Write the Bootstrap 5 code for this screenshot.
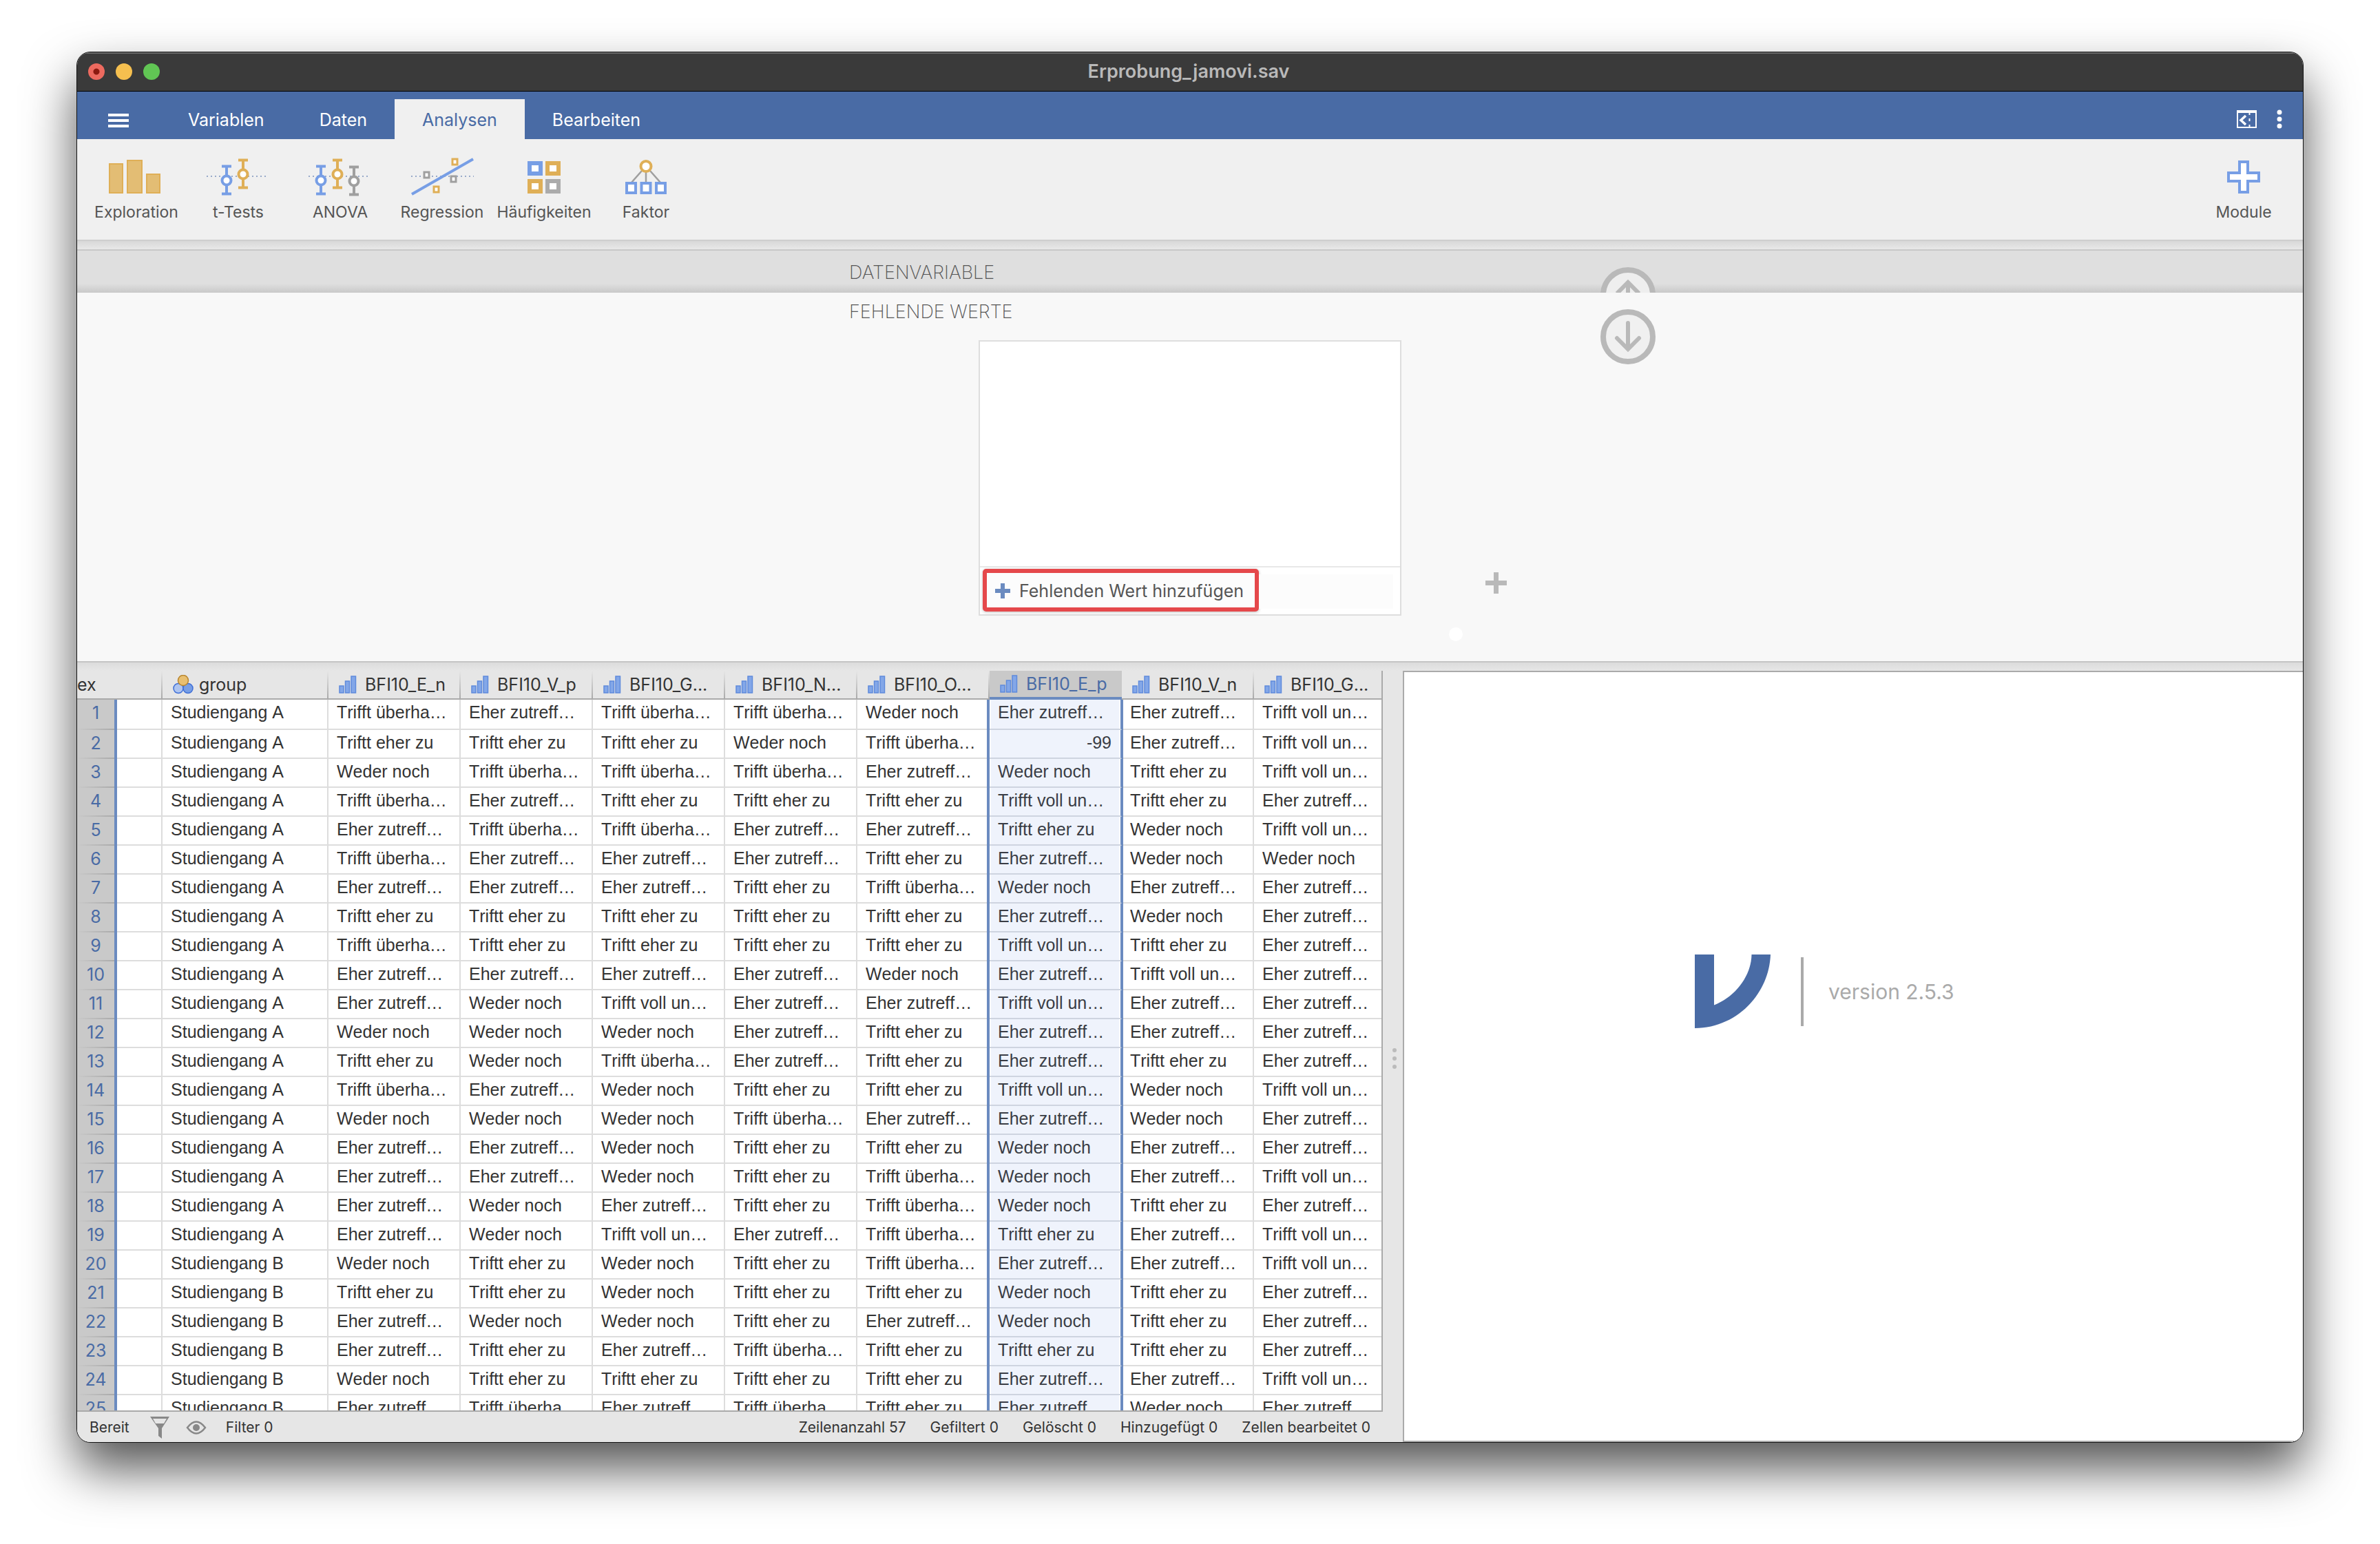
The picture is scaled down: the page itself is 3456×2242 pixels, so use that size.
<!DOCTYPE html>
<html lang="de">
<head>
<meta charset="utf-8">
<meta name="viewport" content="width=device-width, initial-scale=1">
<title>Erprobung_jamovi.sav</title>
<link href="https://cdn.jsdelivr.net/npm/bootstrap@5.3.0/dist/css/bootstrap.min.css" rel="stylesheet">
<style>
:root{--blue:#496ba5;--sel:#6b8bc0;--ink:#333;--rule:#aaa}
body{font-family:Inter,"Liberation Sans",sans-serif;background:#fff;color:var(--ink)}
button{font:inherit;color:inherit;background:none;border:0;padding:0}
svg{display:block}
.desktop{padding:75px 111px 147px}
.app-window{border:1px solid #111;border-radius:20px;background:#e6e6e6;box-shadow:0 38px 72px rgba(0,0,0,.67);min-height:0}
/* title bar */
.titlebar{height:57px;background:#3a3a3a;border-bottom:1px solid #000;box-shadow:inset 0 2px 0 #6a6a6a;padding:0 16px}
.light{width:24px;height:24px;border-radius:50%}
.wintitle{font-size:27px;line-height:30px;font-weight:600;color:#b9b9b9}
.light-r{background:radial-gradient(circle,#8c1a10 0 4px,#ed6a5f 5px)}
.light-y{background:#f5bf4f}.light-g{background:#61c554}
.spacer-lights{width:108px}
/* ribbon */
.ribbon-tabs{height:69px;background:var(--blue);color:#fff;font-size:25px;line-height:30px}
.rtab{height:58px;padding:2px 40px 0}
.rtab.burger{width:121px;padding:4px 0 0 45px}
.rtab.corner{padding:0 26px 0 0}
.rtab.active{background:#f0f0f0;color:var(--blue)}
.tools{height:146px;background:#f0f0f0;padding:26px 12px 0;color:#555}
.tool{width:148px;font-size:23px;line-height:28px}
.tool svg{margin:0 auto 6px}
.ribbon-shade{height:16px;border-top:2px solid #cecece;border-bottom:2px solid #c8c8c8;background:linear-gradient(#d8d8d8,#e8e8e8)}
/* variable editor */
.band{width:1352px;margin:0 auto;padding-left:181px}
.band-title{font-size:27px;line-height:32px;font-weight:200;color:#555}
.band-top{height:61px;background:linear-gradient(#dfdfdf 48px,#c9c9c9 61px);overflow:hidden}
.round{width:80px;height:80px;flex:none}
.editor{background:#f8f8f8;height:537px;border-bottom:2px solid #c4c4c4}
.editor-grid{display:grid;grid-template-columns:188px 614px 1fr 80px;grid-template-rows:69px 400px}
.ga-title{grid-column:1/4;padding-top:12px}
.ga-ctl{grid-column:4;grid-row:1/3;padding-top:24px}
.ga-box{grid-column:2;grid-row:2}
.ga-side{grid-column:3;grid-row:2;padding:337px 0 0 69px}
.missing{border:2px solid #dedede;background:#fff}
.missing-foot{height:70px;border-top:2px solid #e8e8e8;padding:2px 4px}
.foot-fill{background:#fcfcfc;height:50px;margin:8px 6px 0 0}
.add-missing{height:62px;border:6px solid #e5484b;border-radius:5px;background:#fcfcfc;padding:2px 16px 0 12px;gap:13px;font-size:25px;line-height:30px;color:#555;box-shadow:0 1px 4px rgba(0,0,0,.25)}
.plus-side{margin-left:53px}
.dot-white{width:20px;height:20px;border-radius:50%;background:#fff;margin-top:49px}
/* work area */
.work{min-height:0;background:linear-gradient(#dcdcdc,#e6e6e6 12px)}
.sheet-pane{width:1896px;padding-top:12px;flex:none}
.sheet-clip{min-height:0;overflow:hidden;border-right:2px solid var(--rule);border-bottom:2px solid var(--rule)}
.sheet{table-layout:fixed;width:1901px;border-collapse:separate;border-spacing:0}
.sheet th,.sheet td{white-space:nowrap;overflow:hidden;vertical-align:top;font-weight:400}
.sheet thead th{height:42px;padding:0 0 0 15px;border-bottom:2px solid var(--rule);font-size:25px;line-height:40px;background:linear-gradient(transparent,var(--rule)) right/2px 100% no-repeat}
.sheet thead th.idx{padding-left:0}
.sheet thead th.on{background:#c9c9c9;border-bottom:4px solid var(--sel);line-height:38px;color:var(--blue)}
.sheet tbody td{height:42px;padding:0 0 0 12px;font:25px/36px "Liberation Sans",Arial,sans-serif;font-kerning:none;background:#fff;border-right:2px solid #ddd;border-bottom:2px solid #ddd}
.sheet tbody th{height:42px;padding:0;border-right:4px solid var(--sel);text-align:center;color:var(--blue);font-size:25px;line-height:38px;background:linear-gradient(90deg,transparent,var(--rule)) bottom/100% 2px no-repeat #c9c9c9}
.sheet tbody tr:first-child>*{height:44px}
.sheet tbody td.on{position:relative;overflow:visible;background:#eff3fc;color:#3a3d45;border-right-color:var(--sel);border-bottom-color:#ced4e0;box-shadow:-4px 0 0 var(--sel),2px 0 0 var(--sel),inset 2px 0 0 #fff,inset -2px 0 0 #fff}
.sheet tbody td.num{text-align:right;padding-right:13px}
.hd{gap:12px}
.hd-nominal{gap:8px}
.statusbar{height:44px;font-size:21px;line-height:42px;padding:2px 18px 0;flex:none}
.stats{gap:35px}
.splitter{width:29px;flex:none;padding:18px 0 0 4px}
.results{background:#fff;border:2px solid var(--rule);border-right:0;margin-top:12px;padding:410px 0 0 422px}
.vrule{width:4px;height:100px;background:#aaa;margin:4px 36px 0 44px}
.version{font-size:30px;line-height:36px;padding-top:36px;color:#aaa}
.zero{stroke:#496ba5;stroke-width:1.5;stroke-dasharray:2 4;stroke-opacity:.7}
</style>
</head>
<body>
<div class="desktop vh-100 d-flex flex-column">
<main class="app-window flex-grow-1 d-flex flex-column overflow-hidden">
  <header class="titlebar d-flex align-items-center justify-content-between flex-shrink-0">
    <div class="d-flex gap-3">
      <button class="light light-r" aria-label="Schließen"></button><button class="light light-y" aria-label="Minimieren"></button><button class="light light-g" aria-label="Maximieren"></button>
    </div>
    <div class="wintitle">Erprobung_jamovi.sav</div>
    <div class="spacer-lights"></div>
  </header>

  <nav class="ribbon-tabs d-flex align-items-end flex-shrink-0">
    <button class="burger rtab" aria-label="Menü"><svg width="30" height="20" fill="#fff"><path d="M0 0h30v4H0zM0 8h30v4H0zM0 16h30v4H0z"/></svg></button>
    <button class="rtab">Variablen</button><button class="rtab">Daten</button><button class="rtab active">Analysen</button><button class="rtab">Bearbeiten</button>
    <div class="ms-auto d-flex align-items-center rtab corner gap-3">
      <button class="me-2" aria-label="Ergebnisse ausblenden"><svg width="30" height="26" fill="none" stroke="#fff"><path d="M1 1v24h27V1" stroke-width="2"/><path d="M0 2h29" stroke-width="4"/><path d="M13 8 6 14.500l7 6.500" stroke-width="3.500"/><path d="M18.500 4v3m0 5v4m0 5v4" stroke-width="2"/></svg></button>
      <button class="mx-1" aria-label="Einstellungen"><svg width="8" height="28" fill="#fff"><circle cx="4" cy="4" r="3.500"/><circle cx="4" cy="14" r="3.500"/><circle cx="4" cy="24" r="3.500"/></svg></button>
    </div>
  </nav>

  <div class="tools d-flex align-items-start flex-shrink-0">
    <button class="tool"><svg width="96" height="60" fill="#e3bd74" stroke="#dfaf57" stroke-width="2"><path d="M9 10h19v42H9zM35 5h21v47H35zM63 25h19v27H63z"/></svg>Exploration</button>
    <button class="tool"><svg width="96" height="60" fill="none" stroke-width="4"><path class="zero" d="M2 28h90"/><g stroke="#779ee5"><path d="M31 13v41M24 13.500h14M24 53.500h14"/><circle cx="31" cy="34" r="6.500" fill="#fff"/></g><g stroke="#dfaf57"><path d="M55 4v41M48 4.500h14M48 44.500h14"/><circle cx="55" cy="25" r="6.500" fill="#fff"/></g></svg>t-Tests</button>
    <button class="tool"><svg width="96" height="60" fill="none" stroke-width="4"><path class="zero" d="M2 28h90"/><g stroke="#779ee5"><path d="M20 13v41M13 13.500h14M13 53.500h14"/><circle cx="20" cy="34" r="6.500" fill="#fff"/></g><g stroke="#dfaf57"><path d="M44 4v41M37 4.500h14M37 44.500h14"/><circle cx="44" cy="25" r="6.500" fill="#fff"/></g><g stroke="#9f9f9f"><path d="M68 14v41M61 14.500h14M61 54.500h14"/><circle cx="68" cy="35" r="6.500" fill="#fff"/></g></svg>ANOVA</button>
    <button class="tool"><svg width="96" height="60" fill="#fff" stroke-width="3"><path class="zero" d="M3 28h91"/><path d="M4 54 93 3" stroke="#779ee5" stroke-width="4"/><path d="M22 22h7v8h-7zM61 28h7v8h-7z" stroke="#9f9f9f"/><path d="M63 3h7v8h-7zM36 43h7v8h-7z" stroke="#dfaf57"/></svg>Regression</button>
    <button class="tool"><svg width="96" height="60" fill="#fff" stroke-width="6"><path d="M27 9h16v15H27z" stroke="#779ee5"/><path d="M53 9h16v15H53zM27 35h16v15H27z" stroke="#dfaf57"/><path d="M53 35h16v15H53z" stroke="#ababab"/></svg>Häufigkeiten</button>
    <button class="tool"><svg width="96" height="60" fill="#fff"><path d="M42 20 27 37M48 20v17M54 20l15 17" stroke="#9f9f9f" stroke-width="2.500"/><circle cx="48" cy="13.500" r="7.500" stroke="#dfaf57" stroke-width="4"/><path d="M20 38h13v14H20zM41.500 38h13v14h-13zM63 38h13v14H63z" stroke="#779ee5" stroke-width="4"/></svg>Faktor</button>
    <button class="tool ms-auto"><svg width="96" height="60"><path d="M42 7h12v16h16v12H54v16H42V35H26V23h16z" fill="#fff" stroke="#779ee5" stroke-width="4"/></svg>Module</button>
  </div>
  <div class="ribbon-shade flex-shrink-0"></div>

  <div class="band-top flex-shrink-0">
    <div class="band d-flex justify-content-between">
      <div class="band-title pt-3">DATENVARIABLE</div>
      <button class="round mt-4" aria-label="Vorherige Variable"><svg width="80" height="80" fill="none" stroke="#b9b9b9"><circle cx="40" cy="40" r="36" fill="#eee" stroke-width="8"/><path d="M40 60V22M24 38l16-16 16 16" stroke-width="6"/></svg></button>
    </div>
  </div>

  <section class="editor flex-shrink-0">
    <div class="band editor-grid">
      <div class="band-title ga-title">FEHLENDE WERTE</div>
      <div class="ga-ctl"><button class="round" aria-label="Nächste Variable"><svg width="80" height="80" fill="none" stroke="#b9b9b9"><circle cx="40" cy="40" r="36" fill="#f0f0f0" stroke-width="8"/><path d="M40 20v38M24 42l16 16 16-16" stroke-width="6" stroke-linecap="round"/></svg></button></div>
      <div class="missing ga-box d-flex flex-column justify-content-end">
        <div class="missing-foot d-flex">
          <button class="add-missing d-flex align-items-center flex-shrink-0"><svg width="22" height="22" fill="#6b8bc0"><path d="M8 0h6v8h8v6h-8v8H8v-8H0V8h8z"/></svg>Fehlenden Wert hinzufügen</button>
          <div class="foot-fill flex-grow-1"></div>
        </div>
      </div>
      <div class="ga-side">
        <button class="plus-side d-block" aria-label="Hinzufügen"><svg width="31" height="31" fill="#b9b9b9"><path d="M12 0h7v12h12v7H19v12h-7V19H0v-7h12z"/></svg></button>
        <div class="dot-white"></div>
      </div>
    </div>
  </section>

  <section class="work d-flex flex-grow-1">
    <div class="sheet-pane d-flex flex-column">
      <div class="sheet-clip flex-grow-1">
        <table class="sheet" id="sheet">
          <colgroup><col style="width:58px"><col style="width:66px"><col style="width:241px"><col span="8" style="width:192px"></colgroup>
          <thead><tr></tr></thead>
          <tbody></tbody>
        </table>
      </div>
      <footer class="statusbar d-flex align-items-center">
        <span>Bereit</span>
        <button class="ms-4 px-1" aria-label="Filter"><svg width="30" height="32" fill="#888"><path fill-rule="evenodd" d="M2 0h28L19 17v15l-5-4V17zM6 3l4 7h12l4-7z"/></svg></button>
        <button class="ms-3 px-1" aria-label="Filter anzeigen"><svg width="30" height="20" fill="none" stroke="#888" stroke-width="2.500"><path d="M2 10Q15-7 28 10 15 27 2 10z"/><circle cx="15" cy="10" r="5" fill="#888" stroke="none"/></svg></button>
        <span class="ms-4">Filter 0</span>
        <div class="ms-auto d-flex stats"><span>Zeilenanzahl 57</span><span>Gefiltert 0</span><span>Gelöscht 0</span><span>Hinzugefügt 0</span><span>Zellen bearbeitet 0</span></div>
      </footer>
    </div>
    <div class="splitter d-flex align-items-center justify-content-center"><svg width="8" height="32" fill="#bbb"><circle cx="4" cy="4" r="3"/><circle cx="4" cy="16" r="3"/><circle cx="4" cy="28" r="3"/></svg></div>
    <aside class="results flex-grow-1 d-flex align-items-start">
      <svg width="110" height="107" fill="#496ba5"><path d="M0 0h28v73.500C58 62 82 32 82.500 0H110C108 58 60 107 0 107z"/></svg>
      <div class="vrule"></div>
      <div class="version">version 2.5.3</div>
    </aside>
  </section>
</main>
</div>
<script>
const bars = '<svg width="26" height="26" fill="#83a7e8" stroke="#5f8bdc" stroke-width="1.500"><path d="M1 15h6v10H1zM9.500 8h6v17h-6zM18 1h6.500v24H18z"/></svg>';
const nominal = '<svg width="30" height="28" stroke-width="1.500"><circle cx="8" cy="19.500" r="7" fill="#afc5f0" stroke="#3f6fd8"/><circle cx="22" cy="19.500" r="7" fill="#779ee5" stroke="#3f6fd8"/><circle cx="15" cy="8" r="7.500" fill="#e8bf70" stroke="#b8862f"/></svg>';
const names = ['BFI10_E_n','BFI10_V_p','BFI10_G...','BFI10_N...','BFI10_O...','BFI10_E_p','BFI10_V_n','BFI10_G...'];
const SELECTED = 5;
const labels = {U:'Trifft überha…',E:'Eher zutreff…',T:'Triftt eher zu',W:'Weder noch',V:'Trifft voll un…'};
const rows = ['UEUUWEEV','TTTWU-EV','WUUUEWTV','UETTTVTE','EUUEETWV','UEEETEWW','EEETUWEE','TTTTTEWE','UTTTTVTE','EEEEWEVE','EWVEEVEE','WWWETEEE','TWUETETE','UEWTTVWV','WWWUEEWE','EEWTTWEE','EEWTUWEV','EWETUWTE','EWVEUTEV','WTWTUEEV','TTWTTWTE','EWWTEWTE','ETEUTTTE','WTTTTEEV','EUEUTEWE'];
const hd = (icon, text, cls = 'hd') => `<div class="d-flex align-items-center ${cls}">${icon}<span>${text}</span></div>`;
document.querySelector('#sheet thead tr').innerHTML =
  '<th class="idx" colspan="2" scope="col">ex</th><th scope="col">' + hd(nominal, 'group', 'hd-nominal') + '</th>' +
  names.map((n, i) => `<th scope="col"${i === SELECTED ? ' class="on"' : ''}>${hd(bars, n)}</th>`).join('');
document.querySelector('#sheet tbody').innerHTML = rows.map((r, i) =>
  `<tr><th scope="row">${i + 1}</th><td></td><td>Studiengang ${i < 19 ? 'A' : 'B'}</td>` +
  [...r].map((c, j) => `<td class="${j === SELECTED ? 'on' : ''}${c === '-' ? ' num' : ''}">${labels[c] || '-99'}</td>`).join('') + '</tr>').join('');
</script>
<script src="https://cdn.jsdelivr.net/npm/bootstrap@5.3.0/dist/js/bootstrap.bundle.min.js"></script>
</body>
</html>
